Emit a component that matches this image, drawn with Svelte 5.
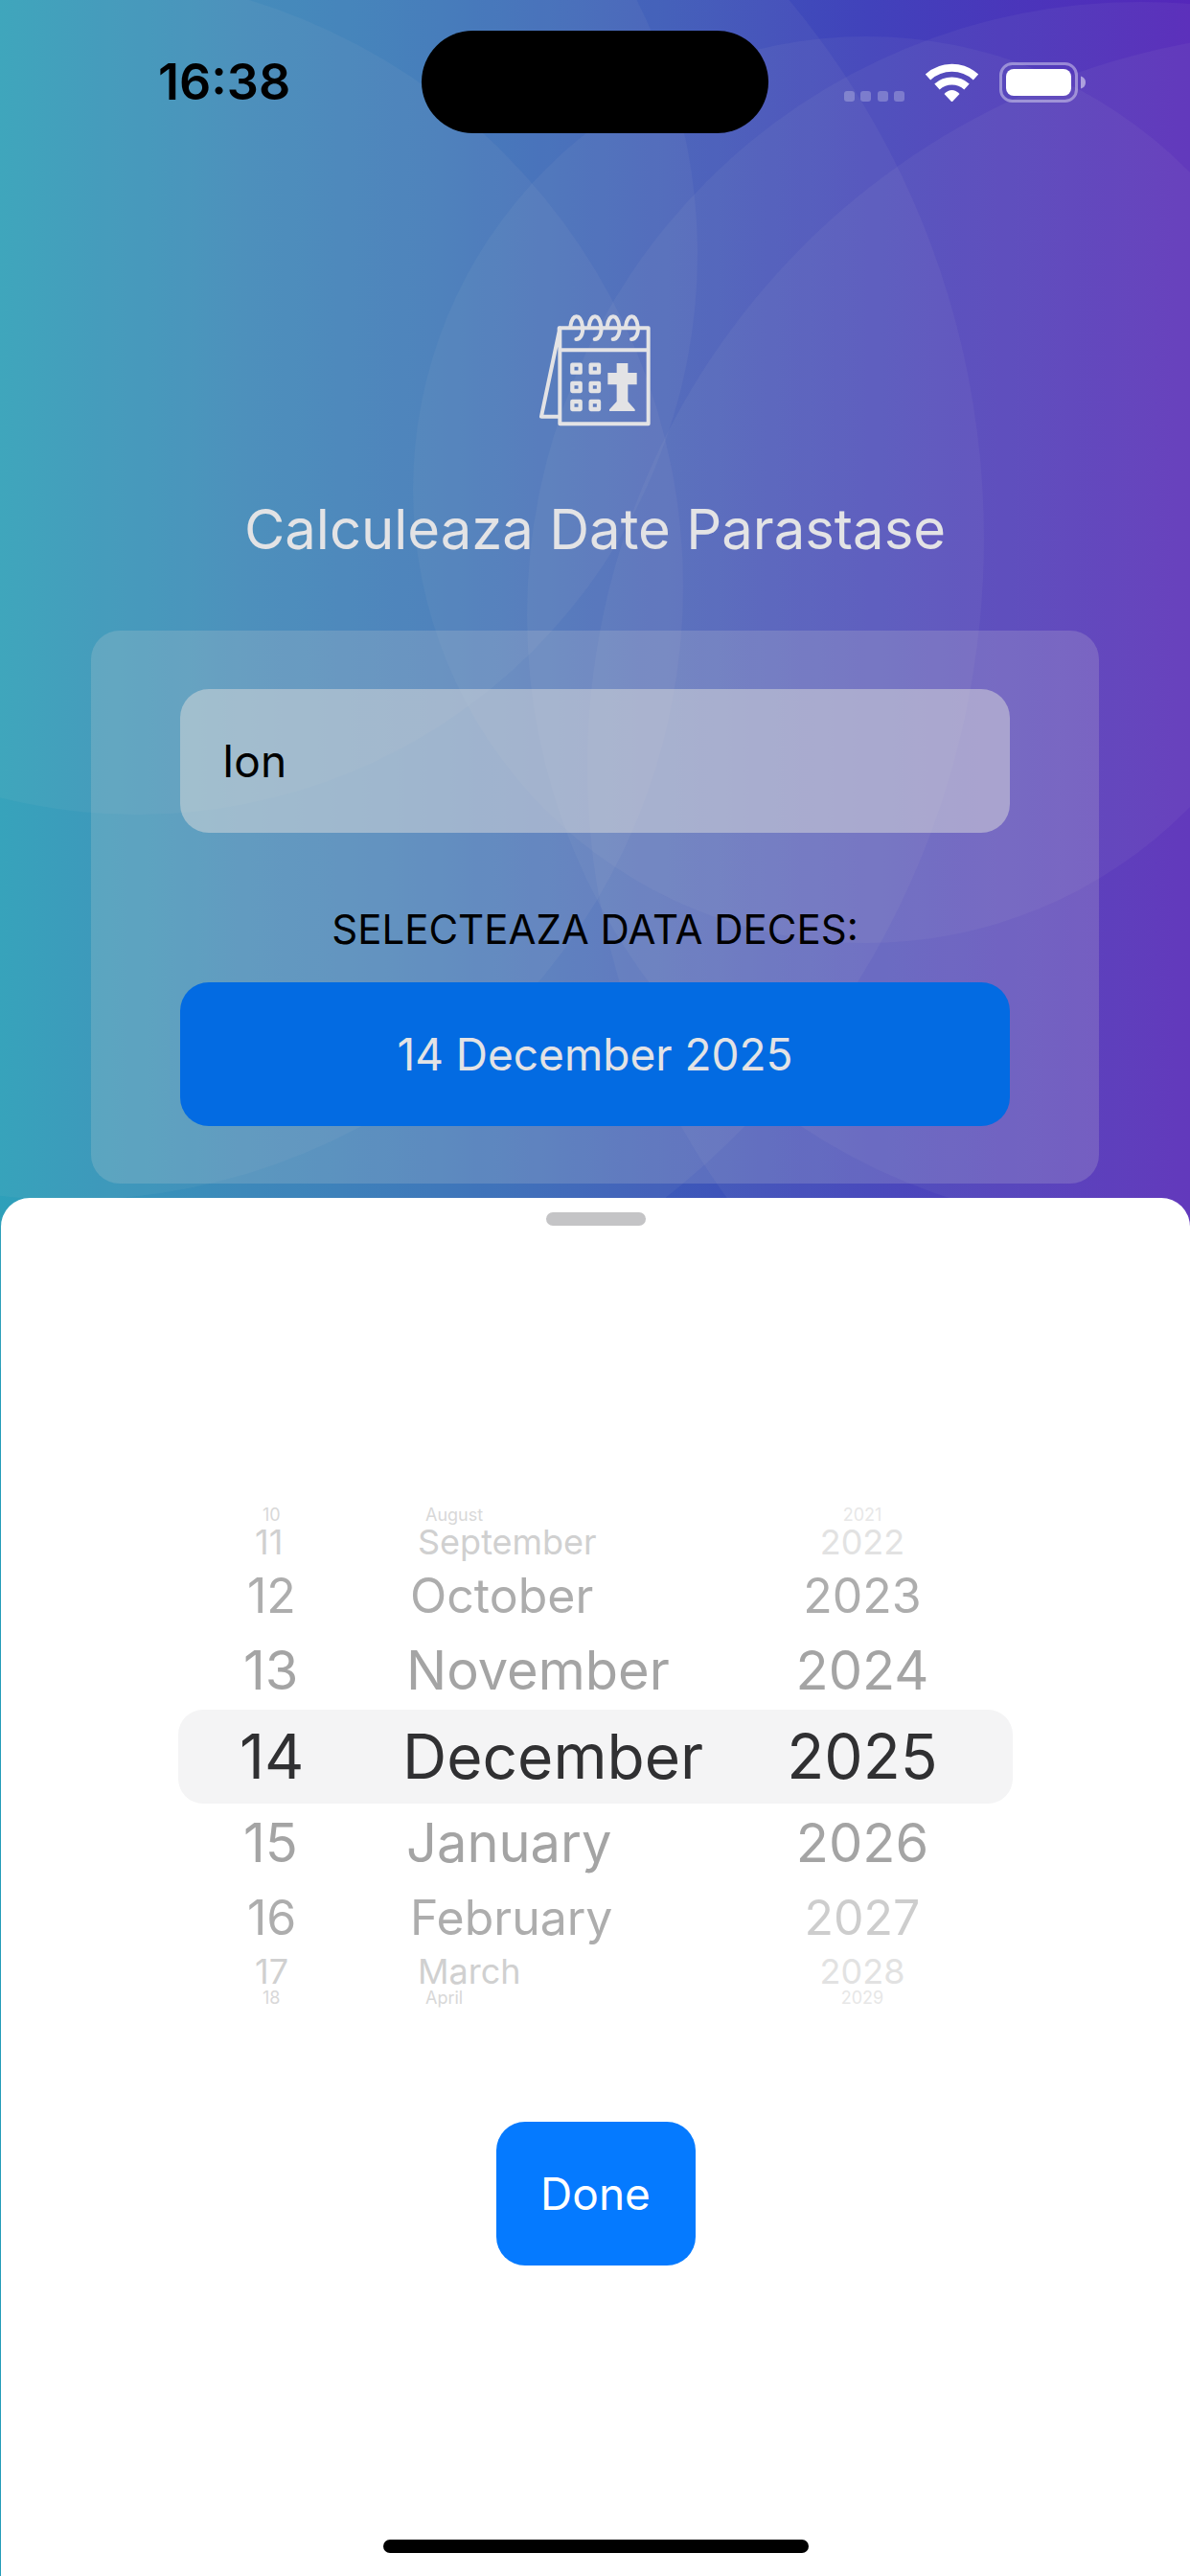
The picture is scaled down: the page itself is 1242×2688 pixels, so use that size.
<script>
  const months = [
    'January', 'February', 'March', 'April', 'May', 'June',
    'July', 'August', 'September', 'October', 'November', 'December'
  ];

  const offsets = [-4, -3, -2, -1, 0, 1, 2, 3, 4];
  const lastYear = 2026;

  const circles = [
    { x: 73, y: 612, r: 640 },
    { x: 143, y: 265, r: 585 },
    { x: 904, y: 511, r: 473 },
    { x: 149, y: 562, r: 878 },
    { x: 1190, y: 642, r: 640 },
    { x: 1381, y: 800, r: 768 }
  ];

  let name = $state('Ion');
  let day = $state(14);
  let month = $state(11);
  let year = $state(2025);

  let daysInMonth = $derived(new Date(year, month + 1, 0).getDate());
  let dayRows = $derived(offsets.map((o) => ((day - 1 + o + daysInMonth) % daysInMonth) + 1));
  let monthRows = $derived(offsets.map((o) => (month + o + 12) % 12));
  let yearRows = $derived(offsets.map((o) => year + o));
</script>

<div class="page">
  <svg class="backdrop" viewBox="0 0 1242 2688" preserveAspectRatio="xMidYMin slice" aria-hidden="true">
    {#each circles as circle}
      <circle cx={circle.x} cy={circle.y} r={circle.r} fill="#d8d8d8" fill-opacity="0.055" />
    {/each}
  </svg>

  <header class="status">
    <time>16:38</time>
    <div class="island"></div>
    <svg class="status-icons" width="252" height="42" viewBox="0 0 252 42" aria-hidden="true">
      <g fill="#fff" fill-opacity="0.25">
        <rect x="0" y="30" width="11" height="11" rx="3" />
        <rect x="17" y="30" width="11" height="11" rx="3" />
        <rect x="35" y="30" width="11" height="11" rx="3" />
        <rect x="52" y="30" width="11" height="11" rx="3" />
      </g>
      <g fill="none" stroke="#fff" stroke-width="8">
        <path d="M87.500 15.500A37 37 0 0 1 137.500 15.500" />
        <path d="M97 25.500A23 23 0 0 1 128 25.500" />
      </g>
      <path d="M104.500 33Q112.500 25 120.500 33L113.500 40.500Q112.500 41.500 111.500 40.500Z" fill="#fff" />
      <rect x="163.500" y="1.500" width="79" height="39" rx="12" fill="none" stroke="#fff" stroke-opacity="0.4" stroke-width="3" />
      <rect x="169" y="7" width="68" height="28" rx="8" fill="#fff" />
      <path d="M247 14.500Q252 16 252 21T247 27.500Z" fill="#fff" fill-opacity="0.5" />
    </svg>
  </header>

  <main>
    <svg class="calendar" width="116" height="117" viewBox="130 84 348 351" aria-hidden="true">
      <g fill="none" stroke="#e3e3e5" stroke-width="12" stroke-linejoin="round" stroke-linecap="round">
        <path d="M194 127H471V427H194ZM194 196H471M194 127L136 404H190M192 127L192 180" />
        <path d="M227 122C232 80 260 80 265 122C268 145 258 162 245 162" />
        <path d="M285 122C290 80 318 80 323 122C326 145 316 162 303 162" />
        <path d="M342 122C347 80 375 80 380 122C383 145 373 162 360 162" />
        <path d="M400 122C405 80 433 80 438 122C441 145 431 162 418 162" />
      </g>
      <g fill="none" stroke="#e3e3e5" stroke-width="13" stroke-linejoin="round">
        <path d="M233 242h25v24h-25zM291 242h25v24h-25z" />
        <path d="M233 300h25v24h-25zM291 300h25v24h-25z" />
        <path d="M233 357h25v24h-25zM291 357h25v24h-25z" />
      </g>
      <path d="M372 237H407V267H435V304H407V357L429 382V387H349V382L372 357V304H344V267H372Z" fill="#e3e3e5" />
    </svg>

    <h1>Calculeaza Date Parastase</h1>

    <form class="card" onsubmit={(e) => e.preventDefault()}>
      <input type="text" aria-label="Nume" bind:value={name} />
      <label for="death-date">SELECTEAZA DATA DECES:</label>
      <button id="death-date" class="date" type="button">{day} {months[month]} {year}</button>
    </form>
  </main>

  <section class="sheet" aria-label="Data deces">
    <div class="handle"></div>

    <div class="picker">
      <div class="wheel days">
        {#each dayRows as value, i}
          <button class="row d{Math.abs(offsets[i])}" type="button" onclick={() => (day = value)}>{value}</button>
        {/each}
      </div>
      <div class="wheel months">
        {#each monthRows as value, i}
          <button class="row d{Math.abs(offsets[i])}" type="button" onclick={() => (month = value)}>{months[value]}</button>
        {/each}
      </div>
      <div class="wheel years">
        {#each yearRows as value, i}
          <button
            class="row d{Math.abs(offsets[i])}"
            class:faint={value > lastYear || Math.abs(offsets[i]) > 2}
            type="button"
            onclick={() => (year = value)}>{value}</button>
        {/each}
      </div>
    </div>

    <button class="done" type="button">Done</button>

    <div class="home-indicator"></div>
  </section>
</div>

<style>
  :global(body) {
    margin: 0;
  }

  .page {
    position: relative;
    display: flex;
    flex-direction: column;
    min-height: 100vh;
    overflow: hidden;
    font-family: Inter, 'Liberation Sans', sans-serif;
    background: linear-gradient(90deg, #259db9 0%, #3485b9 20%, #3673b9 37%, #3d5ab9 56%, #4142bb 73%, #5527ba 100%);
  }

  .backdrop {
    position: absolute;
    inset: 0;
    width: 100%;
    height: 100%;
  }

  .status,
  main,
  .sheet {
    position: relative;
  }

  button,
  input {
    font: inherit;
    border: none;
    margin: 0;
    padding: 0;
  }

  button {
    cursor: pointer;
  }

  /* STATUS BAR */
  .status {
    display: grid;
    grid-template-columns: 1fr auto 1fr;
    align-items: center;
    padding: 32px 109px 0;
  }

  .status time {
    padding-left: 56px;
    font-size: 52px;
    font-weight: 600;
    line-height: 60px;
  }

  .island {
    width: 362px;
    height: 107px;
    border-radius: 54px;
    background: #000;
  }

  .status-icons {
    justify-self: end;
  }

  /* FORM */
  main {
    display: flex;
    flex-direction: column;
    align-items: center;
    padding: 189px 95px 15px;
  }

  h1 {
    margin: 71px 0 70px;
    font-size: 58px;
    font-weight: 400;
    line-height: 72px;
    color: #e3e3e5;
  }

  .card {
    box-sizing: border-box;
    display: flex;
    flex-direction: column;
    align-items: stretch;
    width: 100%;
    padding: 61px 93px 60px;
    border-radius: 30px;
    background: rgba(216, 216, 216, 0.2);
  }

  .card input {
    box-sizing: border-box;
    width: 100%;
    height: 150px;
    padding: 0 44px;
    border-radius: 30px;
    font-size: 46px;
    color: #000;
    background: rgba(220, 220, 220, 0.5);
  }

  .card label {
    margin: 76px 0 30px;
    font-size: 42px;
    line-height: 50px;
    text-align: center;
    color: #000;
  }

  .date,
  .done {
    height: 150px;
    border-radius: 30px;
    font-size: 46px;
  }

  .date {
    color: #e3e3e5;
    background: #036be2;
  }

  /* BOTTOM SHEET */
  .sheet {
    flex: 1;
    display: flex;
    flex-direction: column;
    align-items: center;
    margin-left: 1px;
    padding: 15px 0 24px;
    border-radius: 30px 30px 0 0;
    background: #fff;
  }

  .handle {
    width: 104px;
    height: 14px;
    border-radius: 7px;
    background: #c4c4c6;
  }

  .picker {
    position: relative;
    z-index: 0;
    align-self: stretch;
    display: grid;
    grid-template-columns: 200px 1fr 314px;
    margin: 293px 185px 120px;
  }

  /* selection band behind the middle row */
  .picker::before {
    content: '';
    position: absolute;
    inset: 212px 0;
    z-index: -1;
    border-radius: 26px;
    background: #f4f4f5;
  }

  .wheel {
    display: flex;
    flex-direction: column;
  }

  .row {
    --curve: 0px;
    display: flex;
    align-items: center;
    line-height: 1;
    background: none;
  }

  .days .row {
    padding-left: calc(64px + var(--curve));
  }

  .months .row {
    padding-left: calc(34px + var(--curve));
  }

  .years .row {
    justify-content: center;
  }

  .d0 {
    height: 98px;
    font-size: 64px;
    color: #303032;
  }

  .row.d1 {
    --curve: 4px;
    height: 82px;
    font-size: 56px;
    color: #a4a4a4;
  }

  .row.d2 {
    --curve: 8px;
    height: 74px;
    font-size: 50px;
    color: #adadad;
  }

  .row.d3 {
    --curve: 16px;
    height: 38px;
    font-size: 36px;
    color: #d0d0d0;
  }

  .row.d4 {
    --curve: 24px;
    height: 18px;
    font-size: 18px;
    color: #d8d8d8;
  }

  .faint {
    opacity: 0.6;
  }

  .done {
    width: 208px;
    color: #fff;
    background: #057aff;
  }

  .home-indicator {
    width: 444px;
    height: 14px;
    margin-top: auto;
    border-radius: 7px;
    background: #000;
  }
</style>
